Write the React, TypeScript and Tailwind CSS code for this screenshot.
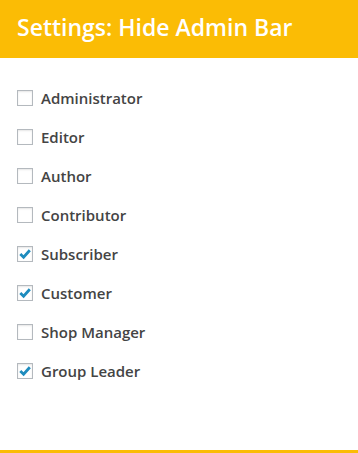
const roles = [
  { name: "Administrator", checked: false },
  { name: "Editor", checked: false },
  { name: "Author", checked: false },
  { name: "Contributor", checked: false },
  { name: "Subscriber", checked: true },
  { name: "Customer", checked: true },
  { name: "Shop Manager", checked: false },
  { name: "Group Leader", checked: true },
];

function Box({ checked }: { checked: boolean }) {
  return (
    <span className="w-4 h-4 border border-[#b4b9be] bg-white shadow-[inset_0_1px_2px_rgba(0,0,0,0.1)] flex items-center justify-center shrink-0">
      {checked && (
        <svg width="14" height="14" viewBox="0 0 14 14">
          <path d="M2.3 7 L5.6 10.3 L11.8 3.3" fill="none" stroke="#1e8cbe" strokeWidth="2.8" />
        </svg>
      )}
    </span>
  );
}

export default function App() {
  return (
    <div className="w-[358px] h-[453px] bg-white flex flex-col font-['Open_Sans',sans-serif] border-b-[3px] border-[#fbbc05]">
      <div className="h-[58px] bg-[#fbbc05] flex items-center px-[17px]">
        <h1 className="text-white text-[23px] font-semibold leading-none pb-[3px]">Settings: Hide Admin Bar</h1>
      </div>
      <ul className="flex flex-col pt-[30px] px-[17px] gap-[19px]">
        {roles.map((r) => (
          <li key={r.name} className="flex items-center gap-2 h-5">
            <Box checked={r.checked} />
            <span className="text-[15px] font-semibold text-[#444]">{r.name}</span>
          </li>
        ))}
      </ul>
    </div>
  );
}
